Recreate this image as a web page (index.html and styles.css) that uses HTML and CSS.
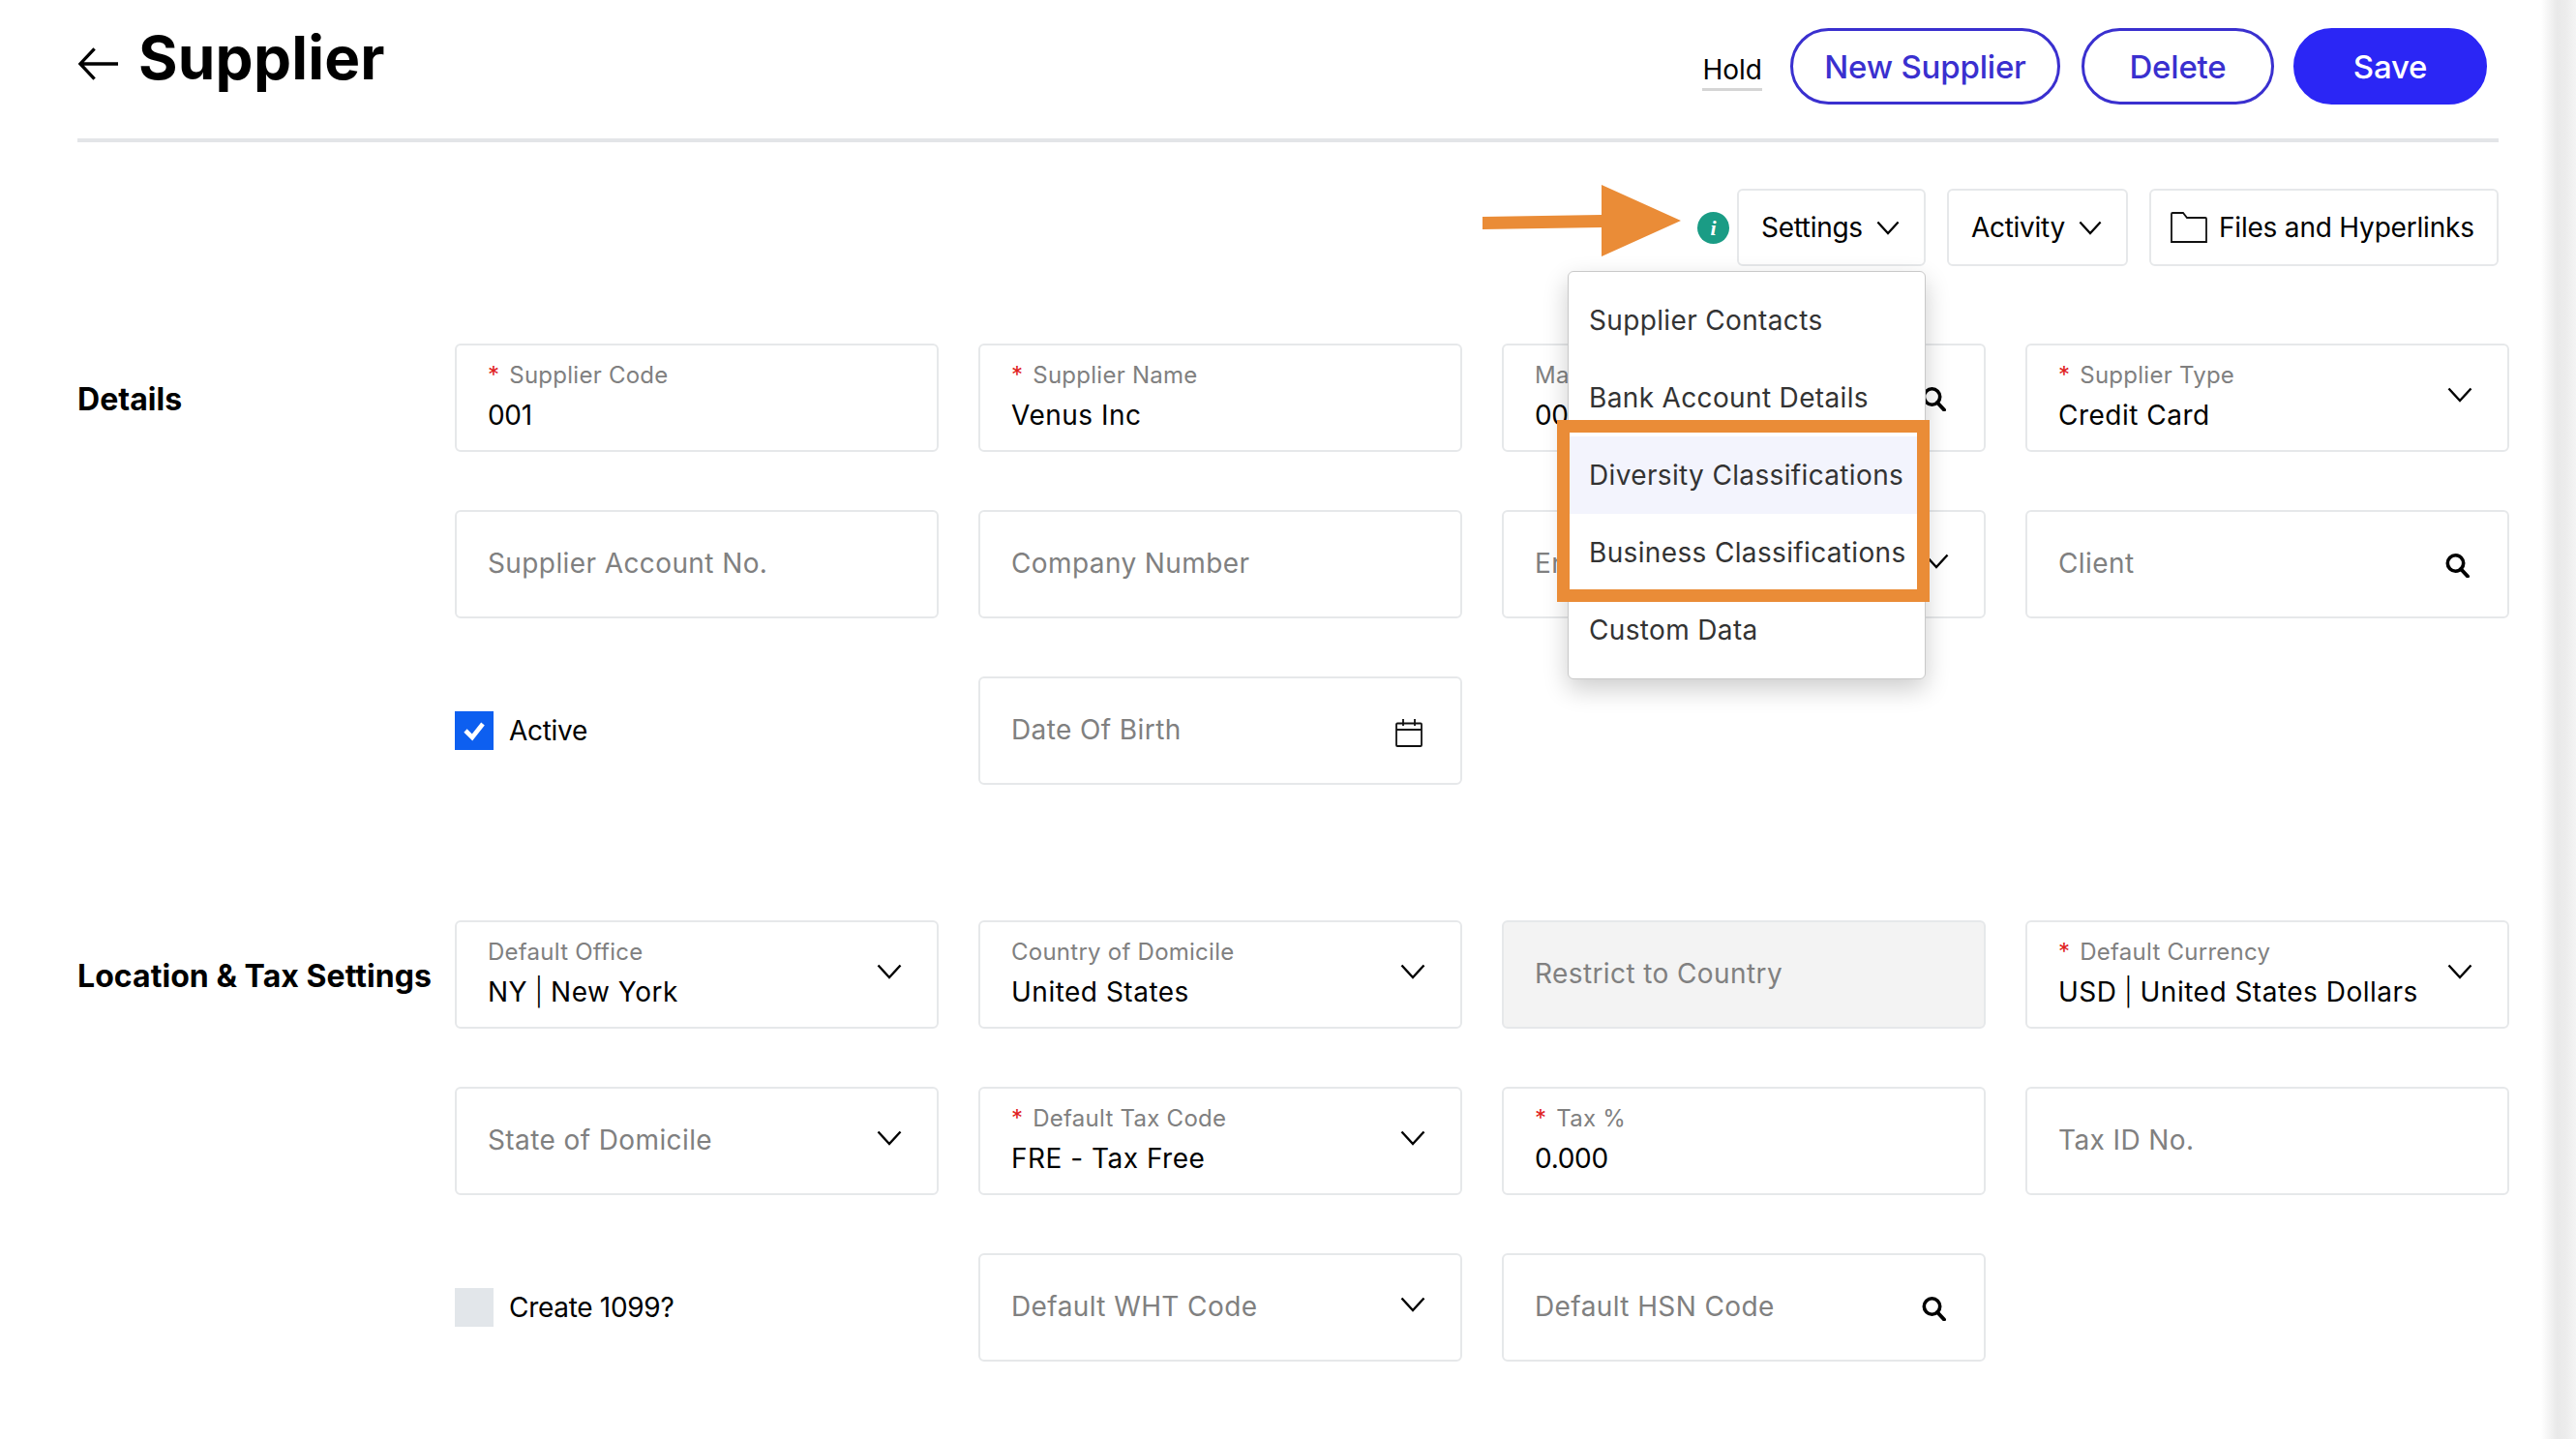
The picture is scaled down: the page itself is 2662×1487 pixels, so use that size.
FILE: index.html
```html
<!DOCTYPE html>
<html lang="en">
<head>
<meta charset="utf-8">
<title>Supplier</title>
<link rel="stylesheet" href="styles.css">
</head>
<body>
<svg class="defs" width="0" height="0" aria-hidden="true">
  <symbol id="chev" viewBox="0 0 26 16"><path d="M1.5 1.5 13 14 24.500 1.500" fill="none" stroke="currentColor" stroke-width="2.4"/></symbol>
  <symbol id="search" viewBox="0 0 26 26"><circle cx="11.5" cy="11" r="8.2" fill="none" stroke="currentColor" stroke-width="3.6"/><path d="M17 17l7 7.5" stroke="currentColor" stroke-width="4" stroke-linecap="round"/></symbol>
</svg>
<div class="page">
  <header class="head">
    <div class="head-left">
      <svg class="back" viewBox="0 0 44 36"><path d="M43 19H3M18 3 3 19l15 16" fill="none" stroke="#000" stroke-width="3.4"/></svg>
      <h1 class="title">Supplier</h1>
    </div>
    <div class="head-actions">
      <a class="hold">Hold</a>
      <button class="pill pill-new">New Supplier</button>
      <button class="pill pill-del">Delete</button>
      <button class="pill pill-save">Save</button>
    </div>
  </header>

  <div class="toolbar">
    <div class="settings-wrap">
      <span class="info">i</span>
      <div class="settings">
        <button class="tool tool-settings">Settings <svg class="tool-chev"><use href="#chev"/></svg></button>
        <div class="menu">
          <div class="menu-item">Supplier Contacts</div>
          <div class="menu-item">Bank Account Details</div>
          <div class="menu-item menu-hover">Diversity Classifications</div>
          <div class="menu-item">Business Classifications</div>
          <div class="menu-item">Custom Data</div>
          <div class="callout"></div>
        </div>
      </div>
    </div>
    <button class="tool tool-activity">Activity <svg class="tool-chev"><use href="#chev"/></svg></button>
    <button class="tool tool-files">
      <svg class="folder" viewBox="0 0 38 32"><path d="M1 31V2a1 1 0 0 1 1-1h11l4 5h19a1 1 0 0 1 1 1v24z" fill="none" stroke="#111" stroke-width="1.8"/></svg>
      Files and Hyperlinks
    </button>
  </div>

  <section class="section sec-details">
    <h2 class="sec-title">Details</h2>
    <div class="grid">
      <div class="field"><div class="fc"><div class="lab"><i>*</i>Supplier Code</div><div class="val num">001</div></div></div>
      <div class="field"><div class="fc"><div class="lab"><i>*</i>Supplier Name</div><div class="val">Venus Inc</div></div></div>
      <div class="field"><div class="fc"><div class="lab">Master Supplier</div><div class="val num">001</div></div><svg class="ic-search"><use href="#search"/></svg></div>
      <div class="field"><div class="fc"><div class="lab"><i>*</i>Supplier Type</div><div class="val">Credit Card</div></div><svg class="ic-chev"><use href="#chev"/></svg></div>

      <div class="field"><div class="fc ph">Supplier Account No.</div></div>
      <div class="field"><div class="fc ph">Company Number</div></div>
      <div class="field"><div class="fc ph">Entity</div><svg class="ic-chev"><use href="#chev"/></svg></div>
      <div class="field"><div class="fc ph">Client</div><svg class="ic-search"><use href="#search"/></svg></div>

      <label class="check"><span class="box box-on"><svg viewBox="0 0 40 40"><path d="M11 20l7 7 11-14" fill="none" stroke="#fff" stroke-width="4.6"/></svg></span>Active</label>
      <div class="field"><div class="fc ph">Date Of Birth</div>
        <svg class="ic-cal" viewBox="0 0 28 30"><path d="M2 5.500h24a1 1 0 0 1 1 1V28a1 1 0 0 1-1 1H2a1 1 0 0 1-1-1V6.500a1 1 0 0 1 1-1zM1 12h26M8 1v7M20 1v7" fill="none" stroke="#111" stroke-width="1.8"/></svg>
      </div>
    </div>
  </section>

  <section class="section sec-location">
    <h2 class="sec-title">Location &amp; Tax Settings</h2>
    <div class="grid">
      <div class="field"><div class="fc"><div class="lab">Default Office</div><div class="val">NY <span class="pipe">|</span> New York</div></div><svg class="ic-chev"><use href="#chev"/></svg></div>
      <div class="field"><div class="fc"><div class="lab">Country of Domicile</div><div class="val">United States</div></div><svg class="ic-chev"><use href="#chev"/></svg></div>
      <div class="field field-off"><div class="fc ph">Restrict to Country</div></div>
      <div class="field"><div class="fc"><div class="lab"><i>*</i>Default Currency</div><div class="val">USD <span class="pipe">|</span> United States Dollars</div></div><svg class="ic-chev"><use href="#chev"/></svg></div>

      <div class="field"><div class="fc ph">State of Domicile</div><svg class="ic-chev"><use href="#chev"/></svg></div>
      <div class="field"><div class="fc"><div class="lab"><i>*</i>Default Tax Code</div><div class="val">FRE - Tax Free</div></div><svg class="ic-chev"><use href="#chev"/></svg></div>
      <div class="field"><div class="fc"><div class="lab"><i>*</i>Tax %</div><div class="val num">0.000</div></div></div>
      <div class="field"><div class="fc ph">Tax ID No.</div></div>

      <label class="check"><span class="box"></span>Create 1099?</label>
      <div class="field"><div class="fc ph">Default WHT Code</div><svg class="ic-chev"><use href="#chev"/></svg></div>
      <div class="field"><div class="fc ph">Default HSN Code</div><svg class="ic-search"><use href="#search"/></svg></div>
    </div>
  </section>

  <svg class="arrow" viewBox="0 0 206 76"><path d="M0 34 123 32V1L205 38 123 75V45L0 47z" fill="#ea8c37"/></svg>
  <div class="edge"></div>
</div>
</body>
</html>
```

FILE: styles.css
```css
* { box-sizing: border-box; }
html, body { margin: 0; padding: 0; background: #fff; }
body { font-family: Inter, "Open Sans", "Liberation Sans", sans-serif; color: #000; }
.defs { position: absolute; }
.page { position: relative; width: 2662px; height: 1487px; overflow: hidden; padding: 0 0 0 80px; }

.head { width: 2502px; height: 147px; padding: 29px 12px 0 0; border-bottom: 4px solid #e3e5e8; display: flex; justify-content: space-between; align-items: flex-start; }
.head-left { display: flex; align-items: center; gap: 20px; height: 72px; margin-top: -5px; }
.back { width: 43px; height: 36px; margin-top: 10px; }
.title { margin: 0; font-size: 62px; font-weight: 700; line-height: 72px; letter-spacing: .2px; }
.head-actions { display: flex; align-items: center; gap: 20px; }
.hold { font-size: 28px; line-height: 36px; margin: 10px 9px 0 0; padding-bottom: 1px; border-bottom: 3px solid #d5d5d5; }
.pill { height: 79px; border-radius: 40px; font: 500 33px Inter, sans-serif; letter-spacing: -.2px; border: 3px solid #3a30cf; background: #fff; color: #3a30cf; padding: 0; }
.pill-new { width: 279px; margin-right: 2px; }
.pill-del { width: 199px; }
.pill-save { width: 200px; background: #2b26f5; border-color: #2b26f5; color: #fff; }

.toolbar { width: 2502px; margin-top: 48px; display: flex; justify-content: flex-end; gap: 22px; height: 80px; }
.settings-wrap { display: flex; align-items: center; gap: 8px; }
.info { width: 33px; height: 33px; border-radius: 50%; background: #1a9c85; color: #fff; font: italic 700 22px/33px "Liberation Serif", serif; text-align: center; }
.settings { position: relative; }
.tool { height: 80px; border: 2px solid #e6e8ea; border-radius: 6px; background: #fff; color: #000; font: 400 28px Inter, sans-serif; letter-spacing: -.3px; display: flex; align-items: center; padding: 0 0 0 23px; gap: 14px; white-space: nowrap; }
.tool-chev { width: 24px; height: 15px; }
.tool-settings { width: 195px; }
.tool-activity { width: 187px; }
.tool-files { width: 361px; padding-left: 20px; gap: 12px; letter-spacing: -.2px; }
.folder { width: 38px; height: 32px; }

.menu { position: absolute; top: 85px; right: 0; width: 370px; height: 422px; padding-top: 10px; background: #fff; border: 1px solid #c9c9c9; border-radius: 6px; box-shadow: 0 10px 26px rgba(0,0,0,.2); z-index: 5; }
.menu-item { height: 80px; line-height: 80px; padding-left: 21px; font-size: 28px; letter-spacing: .35px; color: #333; white-space: nowrap; }
.menu-hover { background: #f3f4fd; }
.callout { position: absolute; left: -12px; top: 153px; width: 385px; height: 188px; border: 13px solid #ea8c37; }

.section { display: flex; }
.sec-details { margin-top: 80px; }
.sec-location { margin-top: 140px; }
.sec-title { width: 390px; margin: 0; font-size: 32px; font-weight: 700; line-height: 116px; height: 112px; white-space: nowrap; letter-spacing: .05px; }
.grid { display: grid; grid-template-columns: repeat(4, 500px); grid-auto-rows: 112px; gap: 60px 41px; }

.field { display: flex; align-items: center; padding: 0 36px 0 32px; border: 2px solid #e6e8ea; border-radius: 6px; background: #fff; }
.field-off { background: #f3f3f3; }
.fc { flex: 1; min-width: 0; margin-bottom: 3px; }
.ph { font-size: 28px; color: #808080; letter-spacing: .4px; }
.lab { font-size: 24px; line-height: 30px; color: #808080; margin-bottom: 8px; letter-spacing: .25px; }
.lab i { font-style: normal; color: #e02020; margin-right: 10px; }
.val { font-size: 28px; line-height: 36px; white-space: nowrap; letter-spacing: .5px; }
.num { letter-spacing: -.3px; }
.pipe { margin: 0 -1px; font-weight: 300; }
.ic-chev { width: 26px; height: 16px; margin-bottom: 6px; flex: none; }
.ic-search { width: 26px; height: 26px; flex: none; margin: 2px 3px 0 0; }
.ic-cal { width: 28px; height: 30px; flex: none; margin-top: 4px; margin-right: 3px; }

.check { display: flex; align-items: center; gap: 16px; font-size: 28px; letter-spacing: -.3px; }
.box { width: 40px; height: 40px; background: #e2e6ea; display: block; }
.box-on { background: #0d5ff0; }
.box svg { display: block; width: 40px; height: 40px; }

.arrow { position: absolute; left: 1532px; top: 190px; width: 206px; height: 76px; z-index: 6; }
.edge { position: absolute; top: 0; right: 0; width: 36px; height: 100%; background: linear-gradient(90deg, #fff, #e9e9e9 45%, #ececec 70%, #f4f4f4); }
```
